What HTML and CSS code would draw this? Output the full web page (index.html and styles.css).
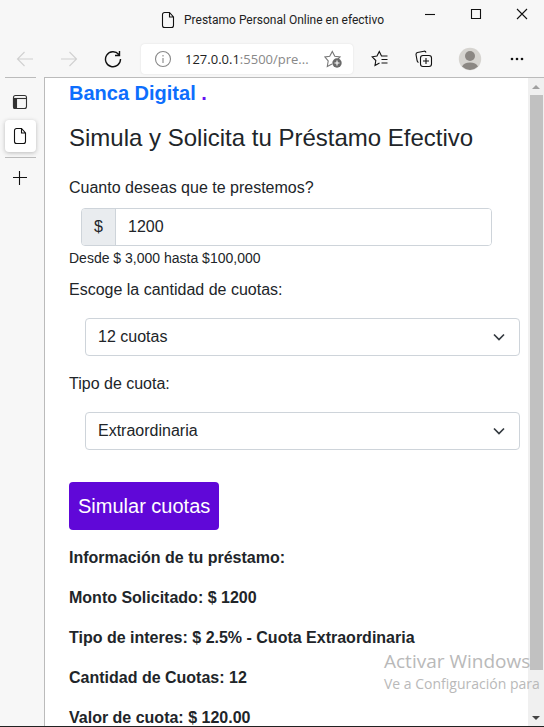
FILE: index.html
```html
<!DOCTYPE html>
<html lang="es">
<head>
<meta charset="utf-8">
<title>Prestamo Personal Online en efectivo</title>
<link rel="stylesheet" href="styles.css">
</head>
<body>
<div class="window">
  <header class="titlebar">
    <div class="title">
      <svg class="doc" width="14" height="18" viewBox="0 0 14 18"><path d="M1.500 3.500a2 2 0 0 1 2-2H8.500L12.500 6V14.500a2 2 0 0 1-2 2H3.500a2 2 0 0 1-2-2zM8.500 1.500V6H12.500"/></svg>
      <span>Prestamo Personal Online en efectivo</span>
    </div>
    <div class="controls">
      <button aria-label="Minimizar"><svg width="12" height="12"><path d="M1 6.500H11"/></svg></button>
      <button aria-label="Maximizar"><svg width="12" height="12"><path d="M1.500 1.500H10.500V10.500H1.500z"/></svg></button>
      <button aria-label="Cerrar"><svg width="12" height="12"><path d="M1 1L11 11M11 1L1 11"/></svg></button>
    </div>
  </header>
  <nav class="toolbar">
    <button class="tool off" aria-label="Atrás"><svg width="18" height="18"><path d="M17 9H1.500M8.500 2L1.500 9L8.500 16"/></svg></button>
    <button class="tool off" aria-label="Adelante"><svg width="18" height="18"><path d="M1 9H16.500M9.500 2L16.500 9L9.500 16"/></svg></button>
    <button class="tool" aria-label="Actualizar"><svg class="reload" width="18" height="18"><path d="M16.500 9A7.500 7.500 0 1 1 14.800 4.500M15.500 1V5.500H11"/></svg></button>
    <div class="address">
      <svg class="info" width="18" height="18"><circle cx="9" cy="9" r="7.500"/><path d="M9 8V13M9 5V6.500"/></svg>
      <a class="url" href="#">127.0.0.1<span>:5500/pre...</span></a>
      <svg class="addfav" width="18" height="18"><path d="M8 14L3.300 16.500L4.200 11L1 7L5.700 6.200L8.300 1.500L10.800 6.200L16 7L14 9"/><circle class="fill" cx="13" cy="13" r="4.700"/><path class="cross" d="M13 10.500V15.500M10.500 13H15.500"/></svg>
    </div>
    <button class="tool" aria-label="Favoritos"><svg width="18" height="18"><path d="M8.500 13L4 15.500L4.800 10.500L1.200 6.800L6 6L8.300 1.500L10.500 6H16.500M10.500 9.500H16.500M10.500 13H16.500"/></svg></button>
    <button class="tool" aria-label="Colecciones"><svg width="18" height="18"><path d="M3.500 12.500Q2.500 12 2.200 11L1 4.500Q1 2.800 2.500 2.500L9 1.200Q10.600 1 11 2.500"/><rect x="5.500" y="5.500" width="11" height="11" rx="2.500"/><path d="M11 8V14M8 11H14"/></svg></button>
    <button class="tool wide" aria-label="Perfil"><svg class="avatar" width="24" height="24"><circle class="back" cx="12" cy="12" r="11.200"/><circle cx="12" cy="9" r="5"/><path d="M4 19.500Q6 15.500 12 15.500T20 19.500Q16 23 12 23T4 19.500z"/></svg></button>
    <button class="tool wide" aria-label="Más"><svg class="dots" width="16" height="6"><circle cx="3" cy="3" r="1.300"/><circle cx="8" cy="3" r="1.300"/><circle cx="13" cy="3" r="1.300"/></svg></button>
  </nav>
  <div class="body">
    <aside class="tabs">
      <button class="tab top" aria-label="Menú de pestañas"><svg class="panel" width="16" height="16"><rect x="1.500" y="1.500" width="13" height="13" rx="2"/><path d="M1.500 4.500H14.500"/><path class="solid" d="M1.500 4.500H4.500V14.500H3Q1.500 14.500 1.500 13z"/></svg></button>
      <button class="tab active" aria-label="Pestaña actual"><svg class="doc" width="14" height="18" viewBox="0 0 14 18"><path d="M1.500 3.500a2 2 0 0 1 2-2H8.500L12.500 6V14.500a2 2 0 0 1-2 2H3.500a2 2 0 0 1-2-2zM8.500 1.500V6H12.500"/></svg></button>
      <button class="tab new" aria-label="Nueva pestaña"><svg width="16" height="16"><path d="M7.500 1V15M1 7.500H15"/></svg></button>
    </aside>
    <main class="page">
      <a class="brand" href="#">Banca Digital <span>.</span></a>
      <h1>Simula y Solicita tu Préstamo Efectivo</h1>
      <form>
        <label for="monto">Cuanto deseas que te prestemos?</label>
        <div class="group">
          <span class="prefix">$</span>
          <input id="monto" type="text" value="1200">
        </div>
        <small>Desde $ 3,000 hasta $100,000</small>
        <label for="cuotas">Escoge la cantidad de cuotas:</label>
        <div class="select">
          <select id="cuotas"><option>12 cuotas</option></select>
          <svg width="16" height="16" viewBox="0 0 16 16"><path d="M3 5.500L8 10.500L13 5.500"/></svg>
        </div>
        <label for="tipo">Tipo de cuota:</label>
        <div class="select">
          <select id="tipo"><option>Extraordinaria</option></select>
          <svg width="16" height="16" viewBox="0 0 16 16"><path d="M3 5.500L8 10.500L13 5.500"/></svg>
        </div>
        <button class="submit" type="button">Simular cuotas</button>
      </form>
      <section class="result">
        <p>Información de tu préstamo:</p>
        <p>Monto Solicitado: $ 1200</p>
        <p>Tipo de interes: $ 2.5% - Cuota Extraordinaria</p>
        <p>Cantidad de Cuotas: 12</p>
        <p>Valor de cuota: $ 120.00</p>
      </section>
    </main>
    <div class="scroll">
      <svg class="up" width="16" height="17"><path d="M4 11H12L8 7z"/></svg>
      <div class="thumb"></div>
      <svg class="down" width="16" height="17"><path d="M4 7H12L8 11z"/></svg>
    </div>
  </div>
  <div class="watermark"><p class="big">Activar Windows</p><p>Ve a Configuración para</p></div>
</div>
</body>
</html>
```

FILE: styles.css
```css
* { box-sizing: border-box; }
body { margin: 0; font-family: "Liberation Sans", Arial, sans-serif; font-size: 16px; line-height: 24px; color: #212529; }
p, h1 { margin: 0; }
a { text-decoration: none; }
button { padding: 0; border: 0; background: none; font: inherit; }
svg { display: block; flex: none; fill: none; stroke: #111; stroke-width: 1.1; }
.window { position: relative; display: flex; flex-direction: column; height: 100vh; overflow: hidden; background: #f7f7f7; border-bottom: 1px solid #222; }

.titlebar { display: flex; justify-content: space-between; height: 40px; padding-left: 161px; flex: none; }
.title { display: flex; align-items: center; gap: 9px; height: 40px; font: 12px/16px Roboto, "Noto Sans", sans-serif; color: #222; white-space: nowrap; }
.controls { display: flex; height: 28px; }
.controls button { display: flex; align-items: center; justify-content: center; width: 46px; }
.controls button:last-child { width: 45px; }

.toolbar { display: flex; align-items: center; height: 37px; padding: 0 4px 0 3px; flex: none; }
.tool { display: flex; align-items: center; justify-content: center; width: 44px; height: 36px; flex: none; }
.wide { width: 47px; }
.off svg { stroke: #d0d0d0; }
.reload { stroke-width: 1.4; }
.address { display: flex; align-items: center; flex: 1; min-width: 0; height: 30px; margin: 0 5px 0 6px; padding: 0 11px 0 13px; border-radius: 4px; background: #fff; box-shadow: 0 0 2px #ddd; }
.info { stroke: #888; }
.url { flex: 1; min-width: 0; margin-left: 13px; font: 13px/20px "Open Sans", "Noto Sans", sans-serif; color: #222; white-space: nowrap; }
.url span { color: #888; }
.addfav { stroke: #777; }
.fill { fill: #6a6a6a; stroke: none; }
.cross { stroke: #fff; }
.avatar { stroke: none; fill: #8b8783; }
.back { fill: #d6d4d0; }
.dots { fill: #111; stroke: none; }

.body { display: flex; flex: 1; min-height: 0; }
.tabs { display: flex; flex-direction: column; width: 44px; padding: 0 8px 0 5px; flex: none; }
.tab { display: flex; align-items: center; justify-content: center; padding-right: 2px; flex: none; }
.top { height: 43px; border-top: 1px solid #bbb; padding-top: 6px; }
.panel { stroke: #333; }
.active { height: 32px; border-radius: 4px; background: #fff; box-shadow: 0 1px 4px #bbb; }
.new { height: 40px; margin-top: 5px; border-top: 1px solid #bbb; }
.solid { fill: #333; }
.page { flex: 1; min-width: 0; padding-left: 24px; overflow: hidden; background: #fff; border-top: 1px solid #bbb; border-left: 1px solid #bbb; }
.brand { display: block; font-size: 20px; line-height: 30px; font-weight: bold; color: #0d6efd; }
.brand span { color: #6610f2; }
h1 { margin: 15px 0 23px; font-size: 24px; line-height: 30px; font-weight: normal; }
label { display: block; }
.group { display: flex; height: 38px; margin: 8px 36px 2px 12px; border: 1px solid #ced4da; border-radius: 4px; overflow: hidden; }
.prefix { width: 34px; padding: 6px 0; text-align: center; background: #e9ecef; border-right: 1px solid #ced4da; }
.group input { flex: 1; min-width: 0; padding: 0 12px; border: 0; font: inherit; color: inherit; background: #fff; }
small { display: block; margin-bottom: 9px; font-size: 14px; line-height: 21px; }
.select { position: relative; margin: 16px 8px 16px 16px; }
.select select { display: block; width: 100%; height: 38px; padding: 0 12px; border: 1px solid #ced4da; border-radius: 4px; appearance: none; background: #fff; font: inherit; color: inherit; }
.select svg { position: absolute; right: 13px; top: 11px; stroke: #343a40; stroke-width: 1.7; pointer-events: none; }
.submit { display: block; height: 48px; margin-top: 32px; padding: 0 9px; border-radius: 4px; background: #6008d8; color: #fff; font-size: 20px; }
.result { display: flex; flex-direction: column; gap: 16px; margin-top: 16px; font-weight: bold; }

.scroll { display: flex; flex-direction: column; width: 16px; flex: none; background: #f0f0f0; border-top: 1px solid #bbb; }
.thumb { flex: 1; margin: 0 1px 39px 2px; background: #c1c1c1; }
.up { fill: #a0a0a0; stroke: none; }
.down { fill: #444; stroke: none; }
.watermark { position: absolute; right: 0; bottom: 31px; width: 160px; color: #b9b9b9; font: 14px/22px "Open Sans", "Noto Sans", sans-serif; white-space: nowrap; pointer-events: none; }
.watermark .big { font-size: 19px; line-height: 24px; }
```
